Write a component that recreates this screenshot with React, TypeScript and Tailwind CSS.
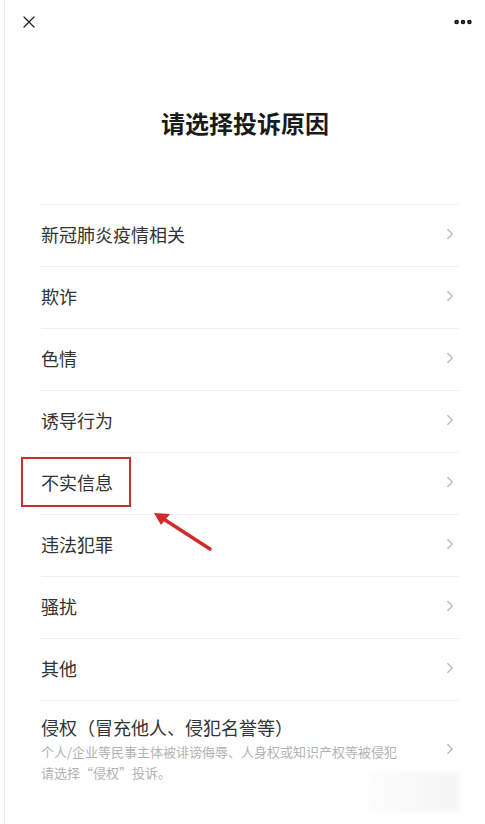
import { X, MoreHorizontal, ChevronRight } from 'lucide-react'

const reasons = ['新冠肺炎疫情相关', '欺诈', '色情', '诱导行为', '不实信息', '违法犯罪', '骚扰', '其他']

export default function App() {
  return (
    <div
      className="relative min-h-[824px] bg-white overflow-hidden text-[#1a1a1a]"
      style={{ fontFamily: '"Noto Sans CJK SC", "Noto Sans", sans-serif' }}
    >
      <div className="ml-[4px] min-h-[824px] border-l border-[#ebebeb]">
        {/* Top bar */}
        <div className="flex h-[42px] items-center justify-between pl-[14px] pr-[11px] pt-[1px]">
          <X className="h-[20px] w-[20px] text-[#222]" strokeWidth={1.5} />
          <MoreHorizontal className="h-[22px] w-[22px] text-[#111]" strokeWidth={3} />
        </div>

        {/* Title */}
        <h1 className="mt-[64px] text-center text-[24px] font-bold leading-[34px] text-[#1a1a1a]">
          请选择投诉原因
        </h1>

        {/* Reason list */}
        <div className="ml-[36px] mr-[26px] mt-[64px]">
          {reasons.map((r) => (
            <div
              key={r}
              className="relative flex h-[62px] items-center justify-between border-t border-[#eeeeee] pb-[3px]"
            >
              <span className="text-[18px] leading-[26px] text-[#333]">{r}</span>
              <ChevronRight className="h-[18px] w-[18px] text-[#b5b5b5]" strokeWidth={1.5} />
              {r === '不实信息' && (
                <div className="absolute left-[-20px] top-[4px] h-[50px] w-[110px] border-2 border-[#c8302f]" />
              )}
            </div>
          ))}
          <div className="flex items-center justify-between border-t border-[#eeeeee] pb-[16px] pt-[13px]">
            <div>
              <div className="text-[18px] leading-[26px] text-[#333]">侵权（冒充他人、侵犯名誉等）</div>
              <div className="mt-[1px] text-[13px] leading-[21px] text-[#b2b2b2]">
                个人/企业等民事主体被诽谤侮辱、人身权或知识产权等被侵犯
                <br />
                请选择“侵权”投诉。
              </div>
            </div>
            <ChevronRight className="h-[18px] w-[18px] text-[#b5b5b5]" strokeWidth={1.5} />
          </div>
        </div>
      </div>

      {/* Annotation arrow */}
      <svg className="absolute left-[150px] top-[508px]" width="66" height="46" viewBox="0 0 66 46">
        <line x1="60" y1="41" x2="12" y2="10" stroke="#d12a2a" strokeWidth="3.5" strokeLinecap="round" />
        <polygon points="4,5 20,6 11,17" fill="#d12a2a" />
      </svg>

      {/* Blurred watermark patch */}
      <div className="absolute left-[368px] top-[772px] h-[40px] w-[90px] rounded-sm bg-gradient-to-r from-[#fdfdfd] to-[#f4f4f4] blur-[3px]" />
    </div>
  )
}
